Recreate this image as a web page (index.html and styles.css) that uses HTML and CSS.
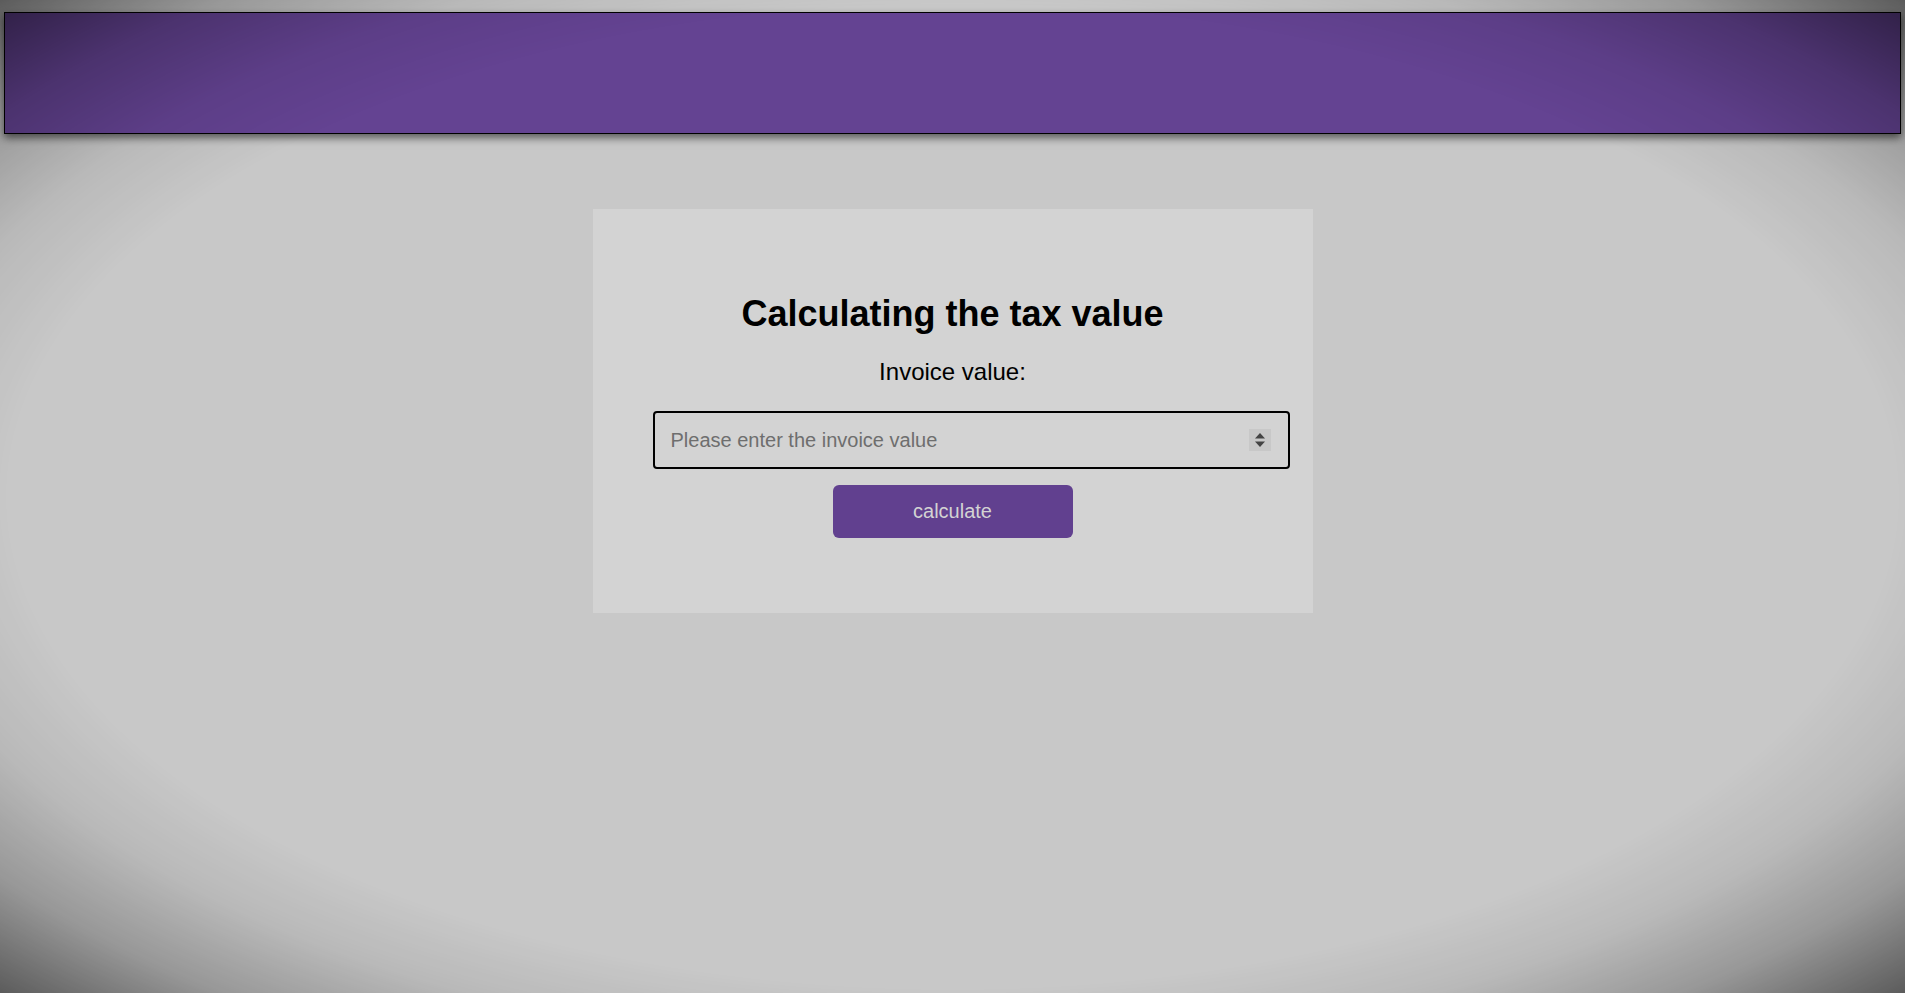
FILE: index.html
```html
<!DOCTYPE html>
<html lang="en">
<head>
<meta charset="utf-8">
<title>Tax calculator</title>
<link rel="stylesheet" href="styles.css">
</head>
<body>
<header class="topbar"></header>
<main class="page">
  <section class="card">
    <h1 class="title">Calculating the tax value</h1>
    <label class="label" for="invoice">Invoice value:</label>
    <div class="field">
      <input class="field-input" id="invoice" type="text" inputmode="decimal" placeholder="Please enter the invoice value">
      <span class="spin">
        <svg width="22" height="22" viewBox="0 0 22 22"><polygon points="6,9.5 11,4 16,9.5" fill="#444"/><polygon points="6,12.5 16,12.5 11,18" fill="#444"/></svg>
      </span>
    </div>
    <button class="btn" type="button">calculate</button>
  </section>
</main>
</body>
</html>
```
FILE: styles.css
```css
html, body {
  margin: 0;
  padding: 0;
}
body {
  min-height: 100vh;
  background: #c8c8c8;
  font-family: "Liberation Sans", Arial, sans-serif;
  color: #000;
}
body::after {
  content: "";
  position: fixed;
  inset: 0;
  pointer-events: none;
  background: radial-gradient(ellipse farthest-corner at 50% 50%, rgba(0,0,0,0) 70%, rgba(0,0,0,0.07) 79%, rgba(0,0,0,0.24) 89%, rgba(0,0,0,0.54) 100%);
  z-index: 10;
}
.topbar {
  margin: 12px 4px 0;
  height: 122px;
  box-sizing: border-box;
  border: 1px solid #000;
  background: #644392;
  box-shadow: 0 4px 8px rgba(0,0,0,0.55);
}
.page {
  display: flex;
  justify-content: center;
  padding-top: 75px;
}
.card {
  width: 720px;
  height: 404px;
  box-sizing: border-box;
  padding-top: 84px;
  background: #d3d3d3;
  text-align: center;
}
.title {
  margin: 0;
  font-size: 36px;
  line-height: 42px;
  font-weight: bold;
}
.label {
  display: block;
  margin-top: 23px;
  font-size: 24px;
  line-height: 28px;
}
.field {
  display: flex;
  align-items: center;
  box-sizing: border-box;
  width: 637px;
  height: 58px;
  margin: 25px 0 0 60px;
  padding: 0 17px 0 16px;
  border: 2px solid #000;
  border-radius: 4px;
}
.field-input {
  flex: 1;
  min-width: 0;
  border: none;
  outline: none;
  background: transparent;
  padding: 0;
  font-family: "Liberation Sans", Arial, sans-serif;
  font-size: 20px;
  color: #000;
}
.field-input::placeholder {
  color: #6e6e6e;
  opacity: 1;
}
.spin {
  display: flex;
  width: 22px;
  height: 22px;
  background: #c8c8c8;
}
.btn {
  display: block;
  width: 240px;
  height: 53px;
  margin: 16px auto 0;
  border: none;
  border-radius: 6px;
  background: #61408f;
  color: #d3d3d3;
  font-family: "Liberation Sans", Arial, sans-serif;
  font-size: 20px;
}
```
